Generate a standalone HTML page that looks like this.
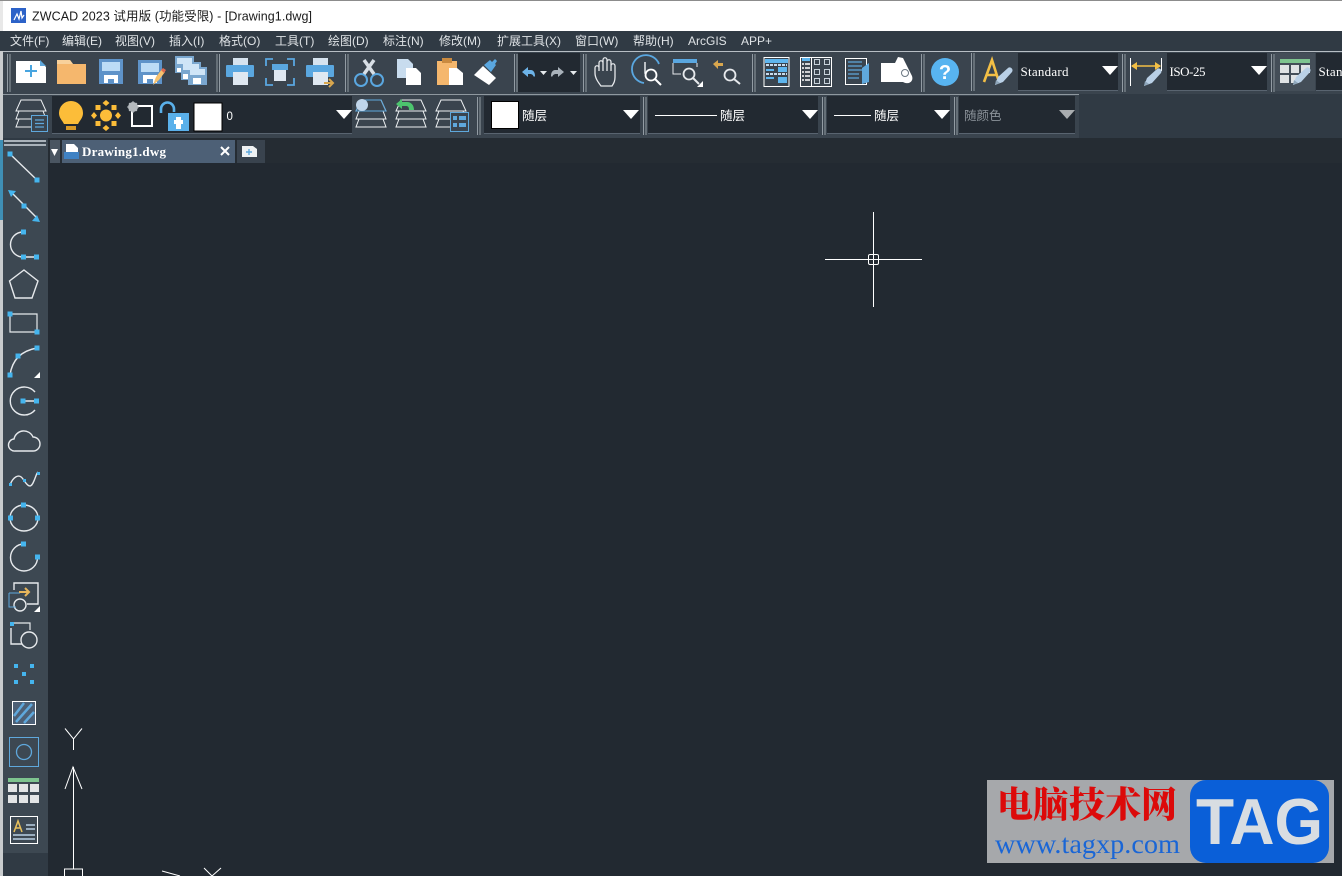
<!DOCTYPE html>
<html><head><meta charset="utf-8"><style>
html,body{margin:0;padding:0;background:#222931;overflow:hidden}
svg{display:block}
.m{font:12px "Liberation Sans","Noto Sans CJK SC",sans-serif;fill:#dfe3e6}
.c{font:12.5px "Liberation Sans","Noto Sans CJK SC",sans-serif;fill:#fff}
.s{font:13px "Liberation Serif",serif;fill:#fff}
</style></head><body>
<svg xmlns="http://www.w3.org/2000/svg" width="1342" height="876" viewBox="0 0 1342 876">
<defs>
<g id="grip"><path d="M0 0h1v38H0zM2.500 0h1v38h-1z" fill="#929ba3"/></g>
<g id="arr"><path d="M-8 -4h16l-8 9z" fill="#fff"/></g>
<g id="sq"><rect x="-2.500" y="-2.500" width="5" height="5" fill="#45b5ee"/></g>
<g id="lay" fill="none" stroke="#eef1f3" stroke-width="1"><path d="M-10 -15H10L15 -4H-15ZM-12 -4L-15 4H15L12 -4M-12 4L-15 12H15L12 4"/></g>
<g id="pen"><path d="M-9 8l3-8 10-9c2-2 6 1 4 4L-1 5z" fill="#b9d0e6"/><path d="M-9 8l1-5 4 3z" fill="#8ea6ba"/></g>
</defs>

<rect width="1342" height="876" fill="#222931"/>
<!-- title bar -->
<rect width="1342" height="31" fill="#fff"/>
<rect width="1342" height="1" fill="#8c8c8c"/>
<rect y="1" width="3" height="30" fill="#e8e8e8"/>
<rect x="11" y="8" width="15" height="15" fill="#2c62c8"/>
<path d="M14 20l3-6 2 5 2-8 1 7 2-3" fill="none" stroke="#fff" stroke-width="1.200"/>
<text x="32" y="20.500" font-family="Liberation Sans,Noto Sans CJK SC,sans-serif" font-size="12.500" fill="#1a1a1a" textLength="280">ZWCAD 2023 试用版 (功能受限) - [Drawing1.dwg]</text>

<!-- menu -->
<rect y="31" width="1342" height="20" fill="#303a44"/>
<text class="m" x="10" y="45">文件(F)</text><text class="m" x="62" y="45">编辑(E)</text><text class="m" x="115" y="45">视图(V)</text><text class="m" x="169" y="45">插入(I)</text><text class="m" x="219" y="45">格式(O)</text><text class="m" x="275" y="45">工具(T)</text><text class="m" x="328" y="45">绘图(D)</text><text class="m" x="383" y="45">标注(N)</text><text class="m" x="439" y="45">修改(M)</text><text class="m" x="497" y="45">扩展工具(X)</text><text class="m" x="575" y="45">窗口(W)</text><text class="m" x="633" y="45">帮助(H)</text><text class="m" x="688" y="45">ArcGIS</text><text class="m" x="741" y="45">APP+</text>

<!-- toolbars bg -->
<rect y="51" width="1342" height="89" fill="#303a44"/>
<rect x="3" y="51" width="1339" height="43" fill="#3a444e"/>
<rect x="3" y="94" width="1076" height="44" fill="#3a444e"/>
<rect x="3" y="51" width="1339" height="1" fill="#b7bec4"/>
<rect x="3" y="94" width="1076" height="1" fill="#8f989f"/>
<rect y="51" width="3" height="825" fill="#c9ccce"/>
<rect y="140" width="3" height="80" fill="#3f8fb5"/>

<!-- grips row 1 -->
<use href="#grip" x="7" y="54"/><use href="#grip" x="216.500" y="54"/><use href="#grip" x="345" y="54"/><use href="#grip" x="514" y="54"/><use href="#grip" x="583" y="54"/><use href="#grip" x="752" y="54"/><use href="#grip" x="921" y="54"/><use href="#grip" x="971" y="53"/><use href="#grip" x="1122" y="54"/><use href="#grip" x="1271" y="54"/>

<!-- new -->
<path d="M16 61h24l6 6v16H16z" fill="#fff"/><path d="M40 60l6 6h-6z" fill="#5fa8dc"/><path d="M31 65v12M25 71h12" stroke="#48a5e0" stroke-width="2"/>
<!-- folder -->
<path d="M57 60h13l3 4h13v20H57z" fill="#f5b76d"/><path d="M57 60h13l3 4H57z" fill="#f8d19b"/>
<!-- save -->
<rect x="99" y="59" width="24" height="25" fill="#5e93c9"/><rect x="102" y="62" width="18" height="9" fill="#bcdcf6"/><path d="M104 83v-8h14v8h-4v-4h-6v4z" fill="#fff"/>
<!-- saveas -->
<rect x="138" y="60" width="24" height="24" fill="#5e93c9"/><rect x="141" y="63" width="18" height="9" fill="#bcdcf6"/><path d="M143 83v-8h14v8h-4v-4h-6v4z" fill="#fff"/><path d="M153 85l3-8 6-8 3 3-6 8z" fill="#f7c26e"/><path d="M161 70l2-2 3 2-2 3z" fill="#e06a50"/>
<!-- multi -->
<g fill="#7aa7cf"><rect x="175" y="56" width="19" height="17"/><rect x="181" y="62" width="20" height="18"/><rect x="188" y="67" width="19" height="18"/></g><g fill="#cfe5f7"><rect x="177" y="58" width="15" height="6"/><rect x="183" y="64" width="16" height="6"/><rect x="190" y="69" width="15" height="6"/></g><path d="M177 72h4v-4h-4zM183 79h5v-5h-5z" fill="#fff"/><path d="M193 84v-6h8v6z" fill="#fff"/>
<!-- print -->
<rect x="233" y="58" width="15" height="8" fill="#d6e3ef"/><rect x="226" y="65" width="28" height="12" rx="1" fill="#5aa7e0"/><rect x="233" y="72" width="15" height="13" fill="#dfe8f1"/>
<!-- preview -->
<path d="M266 66v-7h7M294 66v-7h-7M266 78v7h7M294 78v7h-7" fill="none" stroke="#5aa7e0" stroke-width="1.800"/><rect x="272" y="64" width="16" height="6" fill="#5aa7e0"/><rect x="274" y="70" width="12" height="11" fill="#dfe8f1"/>
<!-- plot -->
<rect x="313" y="58" width="15" height="8" fill="#d6e3ef"/><rect x="306" y="65" width="28" height="12" rx="1" fill="#5aa7e0"/><rect x="313" y="72" width="15" height="13" fill="#dfe8f1"/><path d="M324 83h8M329 79l4 4-4 4" fill="none" stroke="#d9a74e" stroke-width="2"/>
<!-- cut -->
<circle cx="361" cy="80" r="6" fill="none" stroke="#5aa7e0" stroke-width="2"/><circle cx="377" cy="80" r="6" fill="none" stroke="#5aa7e0" stroke-width="2"/><path d="M364 74L374 60M374 74L364 60" stroke="#d8dfe6" stroke-width="3.500"/>
<!-- copy -->
<path d="M397 59h11l5 5v14h-16z" fill="#c8dcee"/><path d="M406 68h10l5 5v12h-15z" fill="#fff"/>
<!-- paste -->
<rect x="437" y="61" width="20" height="24" fill="#f5b76d"/><rect x="442" y="58" width="10" height="5" fill="#c98a40"/><path d="M449 68h8l6 5v12h-14z" fill="#fff"/>
<!-- brush -->
<path d="M474 75l9-9 13 12-7 7z" fill="#fff"/><path d="M484 65l6-5 2 2 3-3 2 2-2 3 1 1-5 7z" fill="#5aa7e0"/>
<!-- undo redo -->
<rect x="518" y="53" width="62" height="39" fill="#222931"/>
<path d="M522 72l6-5v3h3c2 0 4 2 4 6l-1 1c-1-2-2-3-4-3h-2v3z" fill="#6db3e8"/>
<path d="M564 72l-6-5v3h-3c-2 0-4 2-4 6l1 1c1-2 2-3 4-3h2v3z" fill="#a9b2ba"/>
<path d="M540 71h7l-3.500 4zM570 71h7l-3.500 4z" fill="#e6e9ec"/>
<!-- hand -->
<path d="M601 86c-3-4-6-8-6-13v-5c0-3 4-3 4 0v3V63c0-3 4-3 4 0v8V60c0-3 4-3 4 0v11V62c0-3 4-3 4 0v9V66c0-3 4-3 4 0v11c0 4-1 6-3 9z" fill="none" stroke="#e6e9ec" stroke-width="1.300"/>
<!-- zoom realtime -->
<path d="M644 83a14 14 0 1 1 15-19" fill="none" stroke="#5aa7e0" stroke-width="1.800"/><path d="M645 62v11h4" fill="none" stroke="#e6e9ec" stroke-width="1.500"/><circle cx="651" cy="75" r="5.500" fill="#3a444e" stroke="#fff" stroke-width="1.800"/><path d="M655 79l6 6" stroke="#fff" stroke-width="2"/>
<!-- zoom window -->
<rect x="673" y="59" width="24" height="4" fill="#5aa7e0"/><path d="M673 63v11h8M697 63v4" fill="none" stroke="#e6e9ec"/><circle cx="689" cy="74" r="5.500" fill="#3a444e" stroke="#e6e9ec" stroke-width="1.800"/><path d="M693 78l6 6" stroke="#e6e9ec" stroke-width="2"/><path d="M703 81v6h-6z" fill="#fff"/>
<!-- zoom prev -->
<path d="M713 64l5-4v3h5v3h-5v3z" fill="#d9a74e"/><circle cx="730" cy="75" r="5.500" fill="none" stroke="#e6e9ec" stroke-width="1.800"/><path d="M734 79l6 5" stroke="#e6e9ec" stroke-width="2"/>
<!-- props -->
<rect x="764" y="57.500" width="25" height="29" fill="none" stroke="#fff"/><rect x="765" y="59" width="23" height="4" fill="#5fb6ee"/><path d="M766 65h21M766 74h21" stroke="#c8dcee" stroke-dasharray="3 1" stroke-width="2"/><rect x="778" y="67" width="9" height="5" fill="#5fb6ee"/><rect x="778" y="77" width="9" height="6" fill="#5fb6ee"/><rect x="766" y="69" width="8" height="2" fill="#5fb6ee"/><rect x="766" y="77" width="8" height="2" fill="#5fb6ee"/>
<!-- design center -->
<rect x="800.500" y="57.500" width="31" height="29" fill="none" stroke="#fff"/><path d="M811.500 57v30" stroke="#fff"/><rect x="802" y="58" width="8" height="3" fill="#5fb6ee"/><path d="M802 64h8M802 68h8M802 72h8M802 76h8M802 80h8" stroke="#fff" stroke-width="1.500" stroke-dasharray="2 1 5 0"/><g fill="none" stroke="#c8d2da"><rect x="814.500" y="59.500" width="5" height="5"/><rect x="824.500" y="59.500" width="5" height="5"/><rect x="814.500" y="69.500" width="5" height="5"/><rect x="824.500" y="69.500" width="5" height="5"/><rect x="814.500" y="78.500" width="5" height="5"/><rect x="824.500" y="78.500" width="5" height="5"/></g>
<!-- sheet -->
<rect x="845.500" y="58.500" width="21" height="26" fill="none" stroke="#fff"/><path d="M848 62h14M848 66h14M848 70h14M848 74h11M848 78h11" stroke="#5fa8dc" stroke-width="1.300"/><path d="M862 68l7-5v19l-7 2z" fill="#5fa8dc"/>
<!-- map roll -->
<path d="M881 63h14l3-6 5 1 9 18c2 6-4 9-9 6l-1 0h-21z" fill="#fff"/><circle cx="905" cy="73" r="3.500" fill="#fff" stroke="#6b7782"/>
<!-- help -->
<circle cx="945" cy="72" r="14" fill="#58b4f0"/><text x="945" y="79" text-anchor="middle" font-family="Liberation Sans,sans-serif" font-weight="700" font-size="20" fill="#fff">?</text>
<!-- text style -->
<path d="M984 82L992 60L999 82M987 75H997" fill="none" stroke="#f3bf45" stroke-width="2.600"/>
<use href="#pen" x="1004" y="77"/>
<rect x="1018" y="53" width="100" height="37" fill="#222931"/><rect x="1018" y="90" width="100" height="1" fill="#596470"/>
<text class="s" x="1020.500" y="76" textLength="48">Standard</text><use href="#arr" x="1110" y="70"/>
<!-- dim -->
<path d="M1130.500 58v28M1161.500 58v13" stroke="#fff"/><path d="M1132 66h28" stroke="#f3bf45" stroke-width="1.400"/><path d="M1131 66l6-4v8zM1161 66l-6-4v8z" fill="#f3bf45"/>
<use href="#pen" x="1153" y="78"/>
<rect x="1167" y="53" width="100" height="37" fill="#222931"/><rect x="1167" y="90" width="100" height="1" fill="#596470"/>
<text class="s" x="1169.500" y="76" textLength="36">ISO-25</text><use href="#arr" x="1259" y="70"/>
<!-- table style -->
<rect x="1275" y="53" width="40" height="38" fill="#444e58"/>
<rect x="1280" y="59" width="30" height="4" fill="#7ec48f"/>
<g fill="#dfe2e4"><rect x="1280" y="65" width="9" height="8"/><rect x="1291" y="65" width="8" height="8"/><rect x="1301" y="65" width="9" height="8"/><rect x="1280" y="75" width="9" height="8"/><rect x="1291" y="75" width="8" height="8"/></g>
<use href="#pen" x="1302" y="77"/>
<rect x="1316" y="53" width="26" height="37" fill="#222931"/><rect x="1316" y="90" width="26" height="1" fill="#596470"/>
<text class="s" x="1318.500" y="76" textLength="24">Stan</text>

<!-- row 2 -->
<use href="#lay" x="31" y="115"/>
<rect x="31.500" y="115.500" width="16" height="16" fill="#3a444e" stroke="#5fa8dc"/><path d="M35 120h9M35 123.500h9M35 127h9" stroke="#5fa8dc" stroke-width="1.300"/>
<rect x="52" y="96" width="300" height="37" fill="#222931"/><rect x="52" y="133" width="300" height="1" fill="#596470"/>
<!-- bulb -->
<path d="M71 101a12 12 0 0 1 12 12c0 5-3 7-5 11H64c-2-4-5-6-5-11a12 12 0 0 1 12-12z" fill="#fcbd39"/><rect x="66" y="126" width="10" height="4" fill="#d99a27"/>
<!-- sun -->
<g fill="#fcbd39"><circle cx="106" cy="115.500" r="6"/><path d="M106 100l3.500 3-3.500 3-3.500-3zM106 125l3.500 3-3.500 3-3.500-3zM91 115.500l3-3.500 3 3.500-3 3.500zM115 115.500l3-3.500 3 3.500-3 3.500z"/><rect x="95.500" y="105" width="5" height="5"/><rect x="111.500" y="105" width="5" height="5"/><rect x="95.500" y="121" width="5" height="5"/><rect x="111.500" y="121" width="5" height="5"/></g>
<!-- freeze -->
<rect x="132" y="106" width="20" height="20" fill="none" stroke="#fff" stroke-width="2"/><circle cx="133" cy="107" r="5" fill="#b5babe"/><path d="M133 101v12M127 107h12M129 103l8 8M137 103l-8 8" stroke="#b5babe"/>
<!-- lock -->
<path d="M161 113v-4a6.500 6.500 0 0 1 13 0v3" fill="none" stroke="#5ab0ea" stroke-width="2.600"/><rect x="168" y="113" width="21" height="18" fill="#5ab0ea"/><path d="M176 117h5v3h2v4h-2v5h-5v-5h-2v-4h2z" fill="#fff"/>
<!-- color -->
<rect x="194" y="103" width="28" height="28" fill="#fff" stroke="#000"/>
<text x="226.500" y="120" font-family="Liberation Sans,sans-serif" font-size="11.500" fill="#fff">0</text>
<use href="#arr" x="344" y="114"/>
<!-- layer buttons -->
<use href="#lay" x="371" y="115"/>
<path d="M361 100H381L386 111H356Z" fill="none" stroke="#5fa8dc"/>
<circle cx="362" cy="105" r="6" fill="#c0d5ea"/>
<use href="#lay" x="411" y="115"/>
<path d="M396 104l6-5v3h5c4 0 7 3 7 8h-5c0-3-1-4-3-4h-4v3z" fill="#4cc56e"/>
<use href="#lay" x="451" y="115"/>
<rect x="450.500" y="112.500" width="18" height="19" fill="#3a444e" stroke="#5fa8dc"/><rect x="453" y="116" width="4" height="4" fill="#5fa8dc"/><rect x="459" y="116" width="7" height="4" fill="#5fa8dc"/><rect x="453" y="123" width="4" height="4" fill="#5fa8dc"/><rect x="459" y="123" width="7" height="4" fill="#5fa8dc"/>

<use href="#grip" x="477" y="97"/><use href="#grip" x="643" y="97"/><use href="#grip" x="822" y="97"/><use href="#grip" x="954" y="97"/>
<rect x="484" y="96" width="156" height="37" fill="#222931"/><rect x="484" y="133" width="156" height="1" fill="#596470"/>
<rect x="491.500" y="101.500" width="27" height="27" fill="#fff" stroke="#000"/>
<text class="c" x="522" y="120">随层</text><use href="#arr" x="631" y="114"/>
<rect x="648" y="96" width="170" height="37" fill="#222931"/><rect x="648" y="133" width="170" height="1" fill="#596470"/>
<rect x="655" y="115" width="62" height="1" fill="#fff"/><text class="c" x="720" y="120">随层</text><use href="#arr" x="810" y="114"/>
<rect x="827" y="96" width="123" height="37" fill="#222931"/><rect x="827" y="133" width="123" height="1" fill="#596470"/>
<rect x="834" y="115" width="37" height="1" fill="#fff"/><text class="c" x="874" y="120">随层</text><use href="#arr" x="942" y="114"/>
<rect x="959" y="96" width="116" height="37" fill="#222931"/><rect x="959" y="133" width="116" height="1" fill="#596470"/>
<text class="c" x="964" y="120" style="fill:#8b9299">随颜色</text><path d="M1059 110h16l-8 9z" fill="#a9adb0"/>

<!-- tab bar -->
<rect x="48" y="138" width="1294" height="25" fill="#252c33"/>
<rect x="50" y="140" width="10" height="23" fill="#4a5561"/><path d="M51 149h7l-3.500 7z" fill="#fff"/>
<rect x="62" y="140" width="173" height="23" fill="#4d6076"/>
<path d="M66 144h8l4 4v11H66z" fill="#fff"/><rect x="64" y="152" width="15" height="7" fill="#3f82c4"/>
<text x="82" y="156" font-family="Liberation Serif,serif" font-weight="700" font-size="13" fill="#fff" textLength="84">Drawing1.dwg</text>
<path d="M221 147l8 8M229 147l-8 8" stroke="#fff" stroke-width="2"/>
<rect x="237" y="140" width="28" height="23" fill="#39434e"/><path d="M242 146h11l4 3v8h-15z" fill="#eef1f3"/><path d="M249 149v6M246 152h6" stroke="#5fa8dc" stroke-width="1.400"/>

<!-- left bar -->
<rect x="3" y="138" width="45" height="738" fill="#303a44"/>
<rect x="3" y="140" width="45" height="713" fill="#3d4852"/>
<rect x="4" y="140" width="42" height="2" fill="#a9b2ba"/><rect x="4" y="144" width="42" height="2" fill="#a9b2ba"/>
<g fill="none" stroke="#e6e9ec" stroke-width="1.400">
<path d="M10 154L37 180"/>
<path d="M12 193L37 218"/>
<path d="M23 232a12.500 12.500 0 0 0 0 25h13"/>
<path d="M24 270L38 281L32 298H15L9.500 281Z"/>
<path d="M10 314h27v18H10z" stroke-width="1.200"/>
<path d="M10 375c2-14 10-24 27-27"/>
<path d="M35 410a14 14 0 1 1 0-18M22 401h14"/>
<path d="M15 451a6 6 0 0 1-1-12a10 10 0 0 1 19-2a7 7 0 0 1 0 14z"/>
<path d="M10 485c3-8 9-12 13-6s7 10 10 4 3-9 5-11"/>
<ellipse cx="24" cy="518" rx="14" ry="13"/>
<path d="M24 544a13.500 13.500 0 1 0 13.500 13.500"/>
<path d="M14 590V583h24v21H27"/>
<circle cx="20" cy="605" r="6"/>
<path d="M11 628v16h11"/><path d="M11 623h19v7" stroke-width="1.200"/>
<circle cx="29" cy="640" r="8"/>
</g>
<use href="#sq" x="10" y="154"/><use href="#sq" x="37" y="180"/><use href="#sq" x="24" y="206"/>
<path d="M8 190l8 1-5 6zM40 222l-8-1 5-6z" fill="#45b5ee"/>
<use href="#sq" x="23.500" y="232"/><use href="#sq" x="23.500" y="257"/><use href="#sq" x="36.500" y="257"/>
<use href="#sq" x="10" y="314"/><use href="#sq" x="37" y="332"/>
<use href="#sq" x="37" y="348"/><use href="#sq" x="18" y="356"/><use href="#sq" x="10" y="375"/>
<path d="M40 372v6h-6z" fill="#fff"/>
<rect x="20.500" y="398.500" width="5" height="5" fill="#45b5ee"/><rect x="34" y="398.500" width="5" height="5" fill="#45b5ee"/>
<rect x="9" y="483" width="3" height="3" fill="#45b5ee"/><rect x="23" y="479" width="3" height="3" fill="#45b5ee"/><rect x="37" y="472" width="3" height="3" fill="#45b5ee"/>
<use href="#sq" x="23.500" y="505"/><use href="#sq" x="10.500" y="518"/><use href="#sq" x="37.500" y="518"/>
<use href="#sq" x="23.500" y="544"/><use href="#sq" x="37.500" y="557"/>
<path d="M9 593h11M9 593v14h7" fill="none" stroke="#5fa8dc"/>
<path d="M19 592h9M25 588l4 4-4 4" fill="none" stroke="#e8b65c" stroke-width="2"/>
<path d="M40 606v6h-6z" fill="#fff"/>
<rect x="10" y="622" width="4" height="4" fill="#45b5ee"/>
<g fill="#45b5ee"><rect x="14" y="664" width="4" height="4"/><rect x="30" y="664" width="4" height="4"/><rect x="22" y="672" width="4" height="4"/><rect x="14" y="680" width="4" height="4"/><rect x="30" y="680" width="4" height="4"/></g>
<rect x="12.500" y="701.500" width="23" height="23" fill="#4d6076" stroke="#fff"/>
<path d="M14 716l10-13M16 722l16-18M24 723l10-11" stroke="#5fa8dc" stroke-width="2.500"/>
<rect x="9.500" y="737.500" width="29" height="29" fill="none" stroke="#5fa8dc"/><circle cx="24" cy="752" r="7.500" fill="none" stroke="#5fa8dc" stroke-width="1.300"/>
<rect x="8" y="778" width="31" height="4" fill="#7ec48f"/>
<g fill="#e3e5e6"><rect x="8" y="784" width="9" height="8"/><rect x="19" y="784" width="9" height="8"/><rect x="30" y="784" width="9" height="8"/><rect x="8" y="795" width="9" height="8"/><rect x="19" y="795" width="9" height="8"/><rect x="30" y="795" width="9" height="8"/></g>
<rect x="10.500" y="816.500" width="27" height="27" fill="none" stroke="#fff"/>
<path d="M14 832L18 821L22 832M15.500 828H20.500" fill="none" stroke="#e8c05c" stroke-width="1.500"/>
<path d="M26 825h9M26 829h9M13 835h22M13 839h22" stroke="#b9cfe3" stroke-width="1.500"/>

<!-- crosshair -->
<path d="M873.500 212v95M825 259.500h97" stroke="#fff"/>
<rect x="868.500" y="254.500" width="10" height="10" rx="1.500" fill="#222931" stroke="#fff"/><path d="M873.500 254v11M868 259.500h11" stroke="#fff"/>

<!-- UCS -->
<g fill="none" stroke="#fff">
<path d="M65 728.500L73.500 739L82 728.500M73.500 739v11"/>
<path d="M73.500 767v102M65 789L73 767L82 789"/>
<rect x="64.500" y="869" width="18" height="10"/>
<path d="M162 871L180 876"/>
<path d="M204 868L212 876L221 868"/>
</g>

<!-- watermark -->
<rect x="987" y="780" width="347" height="83" fill="#a6a8ab"/>
<text x="997" y="817" font-family="Noto Serif CJK SC,serif" font-weight="900" font-size="36" fill="#dc0a0a" textLength="180">电脑技术网</text>
<text x="995" y="853" font-family="Liberation Serif,serif" font-size="27" fill="#1a66d6" textLength="185" lengthAdjust="spacingAndGlyphs">www.tagxp.com</text>
<rect x="1190" y="780" width="139" height="83" rx="16" fill="#0a5fd8"/>
<text x="1196" y="844" font-family="Liberation Sans,sans-serif" font-weight="700" font-size="65" fill="#d8dde2" textLength="127" lengthAdjust="spacingAndGlyphs">TAG</text>
</svg>
</body></html>
